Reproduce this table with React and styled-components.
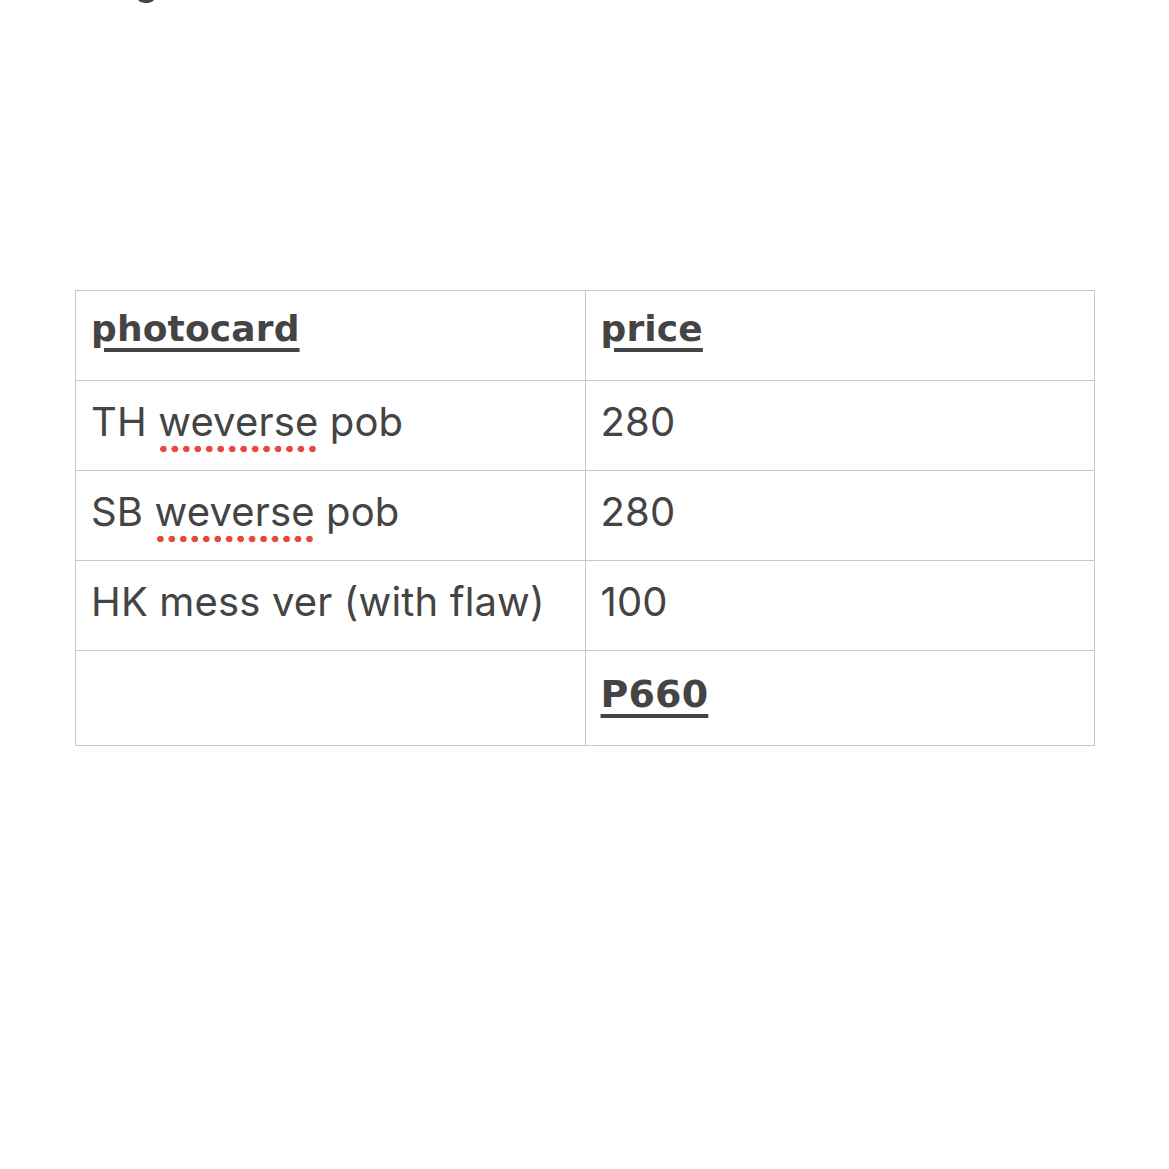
import styled, { createGlobalStyle } from "styled-components";

const GlobalStyle = createGlobalStyle`
  html, body {
    margin: 0;
    padding: 0;
    background: #ffffff;
  }
  body {
    font-family: Inter, "Liberation Sans", sans-serif;
    color: #444444;
  }
`;

const Page = styled.div`
  width: 1169px;
  height: 1169px;
  overflow: hidden;
  background: #fff;
`;

// the tail of a line scrolled off above the table
const Leftover = styled.p`
  margin: -40px 0 0 0;
  padding-left: 134px;
  font-size: 40px;
  line-height: 40px;
  height: 46px;
  color: #444;
`;

const Sheet = styled.div`
  padding: 284px 75px 0 75px;
`;

const Table = styled.table`
  width: 1020px;
  border-collapse: collapse;
  table-layout: fixed;
`;

const Cell = styled.td`
  border: 1px solid #c6c6c6;
  height: ${(p) => p.$h - 1 - p.$pb}px;
  padding: 0 0 ${(p) => p.$pb}px 15px;
  font-family: ${(p) =>
    p.$bold ? '"DejaVu Sans", Verdana, sans-serif' : 'Inter, "Liberation Sans", sans-serif'};
  font-size: ${(p) => p.$size || 40}px;
  line-height: 48px;
  font-weight: ${(p) => (p.$bold ? 700 : 400)};
  letter-spacing: 0.15px;
  color: #444444;
  vertical-align: middle;
  white-space: nowrap;
  text-decoration: ${(p) => (p.$bold ? "underline" : "none")};
  text-decoration-thickness: 3.5px;
  text-underline-offset: 7px;
`;

const Misspelt = styled.span`
  background-image: radial-gradient(circle at center, #e8473d 0, #e8473d 3px, transparent 3.6px);
  background-size: 10.8px 8px;
  background-repeat: space no-repeat;
  background-position: 0 100%;
  padding-bottom: 7px;
`;

const rows = [
  { name: ["TH ", "weverse", " pob"], price: "280" },
  { name: ["SB ", "weverse", " pob"], price: "280" },
  { name: ["HK mess ver (with flaw)"], price: "100" },
];

export default function App() {
  return (
    <Page>
      <GlobalStyle />
      <Leftover>g</Leftover>
      <Sheet>
        <Table>
          <tbody>
            <tr>
              <Cell $bold $size={36} $h={90} $pb={14}>photocard</Cell>
              <Cell $bold $size={36} $h={90} $pb={14}>price</Cell>
            </tr>
            {rows.map((r, i) => (
              <tr key={i}>
                <Cell $h={90} $pb={8}>
                  {r.name.length === 3 ? (
                    <>
                      {r.name[0]}
                      <Misspelt>{r.name[1]}</Misspelt>
                      {r.name[2]}
                    </>
                  ) : (
                    r.name[0]
                  )}
                </Cell>
                <Cell $h={90} $pb={8}>{r.price}</Cell>
              </tr>
            ))}
            <tr>
              <Cell $h={95} $pb={9} />
              <Cell $bold $size={38} $h={95} $pb={9}>P660</Cell>
            </tr>
          </tbody>
        </Table>
      </Sheet>
    </Page>
  );
}
